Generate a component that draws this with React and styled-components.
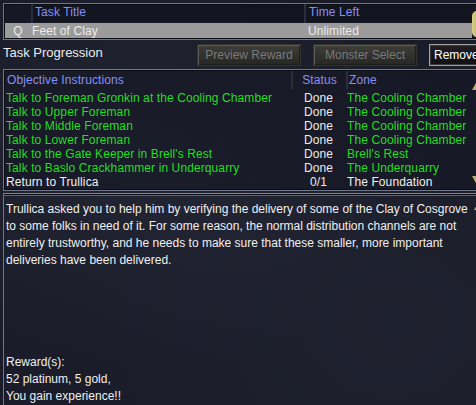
import React from "react";
import styled, { createGlobalStyle } from "styled-components";

const Global = createGlobalStyle`
  html, body { margin: 0; padding: 0; }
  body {
    width: 476px; height: 405px; overflow: hidden;
    background: #1a1c29;
    font-family: "Liberation Sans", Arial, sans-serif;
    font-size: 12px;
    color: #ececec;
  }
`;

const Window = styled.div`
  width: 490px;
  height: 405px;
  display: flex;
  flex-direction: column;
  background:
    radial-gradient(ellipse at 30% 40%, rgba(60,64,84,0.25), transparent 60%),
    radial-gradient(ellipse at 80% 80%, rgba(50,54,72,0.2), transparent 55%),
    #1a1c29;
`;

const Panel = styled.div`
  margin: ${p => p.$margin || "0 0 0 3px"};
  border: 1px solid #6f7689;
  box-shadow: inset 0 0 0 1px #0c0e16;
  padding: 1px;
  display: flex;
  flex-shrink: 0;
  position: relative;
  background: rgba(20, 22, 34, 0.55);
`;

const ListBody = styled.div`
  flex: 1;
  display: flex;
  flex-direction: column;
`;

const Row = styled.div`
  display: grid;
  grid-template-columns: ${p => p.$cols};
  height: ${p => p.$h}px;
  flex-shrink: 0;
  align-items: ${p => p.$alignItems || "center"};
  background: ${p => p.$bg || "transparent"};
  color: ${p => p.$color || "#ececec"};
  white-space: nowrap;
  letter-spacing: 0.1px;
`;

const Cell = styled.div`
  padding-left: ${p => p.$pl || 0}px;
  color: ${p => p.$color || "inherit"};
  height: 100%;
  display: flex;
  align-items: center;
  justify-content: ${p => (p.$align === "center" ? "center" : "flex-start")};
  border-left: ${p => (p.$div ? "2px solid #2b2e3c" : "none")};
  background: ${p => p.$bg || "transparent"};
  overflow: hidden;
`;

const Scroll = styled.div`
  width: 16px;
  display: flex;
  flex-direction: column;
  justify-content: space-between;
  align-items: flex-start;
  padding: ${p => p.$pad || "0"};
`;

const Thumb = styled.div`
  width: 10px;
  height: 26px;
  margin-top: 6px;
  border-radius: 5px;
  background: linear-gradient(90deg, #d8cf86, #b5a85a);
`;

const Arrow = styled.div`
  width: 0; height: 0;
  border-left: 5px solid transparent;
  border-right: 5px solid transparent;
  ${p => p.$down
    ? "border-top: 9px solid #b8ad6a;"
    : "border-bottom: 9px solid #b8ad6a;"}
`;

const Toolbar = styled.div`
  height: 27px;
  flex-shrink: 0;
  display: flex;
  align-items: center;
  padding-left: 3px;
  margin-top: 1px;
`;

const Label = styled.div`
  font-size: 13px;
  width: 194px;
  flex-shrink: 0;
  margin-top: -5px;
`;

const Button = styled.div`
  width: ${p => p.$w}px;
  height: 22px;
  margin-right: 12px;
  box-sizing: border-box;
  display: flex;
  align-items: center;
  justify-content: ${p => (p.$active ? "flex-start" : "center")};
  padding-left: ${p => (p.$active ? "4px" : "0")};
  font-size: 12px;
  color: ${p => (p.$active ? "#ffffff" : "#7a7a7a")};
  border: 1px solid ${p => (p.$active ? "#a0a0a0" : "#34342e")};
  box-shadow: ${p => (p.$active
    ? "inset 0 0 0 1px #3a3a3a"
    : "inset 1px 1px 0 #5c5c52, inset -1px -1px 0 #1c1c18")};
  background-color: ${p => (p.$active ? "#141416" : "#303030")};
  background-image: ${p => (p.$active
    ? "linear-gradient(#202024, #101012)"
    : "linear-gradient(#3e3e3a, #262624)")};
  white-space: nowrap;
  flex-shrink: 0;
`;

const Desc = styled.div`
  margin: 2px 0 0 3px;
  border-top: 1px solid #7d86a0;
  box-shadow: inset 0 1px 0 #0c0e16, inset 0 2px 0 #5d6478;
  border-left: 1px solid #6f7689;
  flex: 1;
  min-height: 0;
  display: flex;
  padding-top: 7px;
`;

const DescText = styled.div`
  flex: 1;
  padding-left: 2px;
  line-height: 17px;
  font-size: 12px;
  color: #f0f0f0;
  white-space: nowrap;
`;

const Reward = styled.div`
  margin-top: 85px;
`;

const GREEN = "#22dd22";
const HEAD = "#8890f2";

const objectives = [
  ["Talk to Foreman Gronkin at the Cooling Chamber", "Done", "The Cooling Chamber", true],
  ["Talk to Upper Foreman", "Done", "The Cooling Chamber", true],
  ["Talk to Middle Foreman", "Done", "The Cooling Chamber", true],
  ["Talk to Lower Foreman", "Done", "The Cooling Chamber", true],
  ["Talk to the Gate Keeper in Brell's Rest", "Done", "Brell's Rest", true],
  ["Talk to Baslo Crackhammer in Underquarry", "Done", "The Underquarry", true],
  ["Return to Trullica", "0/1", "The Foundation", false],
];

const TOPCOLS = "26px 273px 164px";
const OBJCOLS = "286px 55px 123px";

export default function App() {
  return (
    <>
      <Global />
      <Window>
        <Panel $margin="3px 0 0 3px">
          <ListBody>
            <Row $cols={TOPCOLS} $h={17} $color={HEAD} $bg="#12141f">
              <Cell $bg="#161826" />
              <Cell $pl={2} $div style={{ paddingBottom: 3 }}>Task Title</Cell>
              <Cell $pl={3} $div style={{ paddingBottom: 3 }}>Time Left</Cell>
            </Row>
            <Row $cols={TOPCOLS} $h={15} $bg="#9b9b9b" style={{ marginTop: 1 }}>
              <Cell $align="center">Q</Cell>
              <Cell $pl={1}>Feet of Clay</Cell>
              <Cell $pl={4}>Unlimited</Cell>
            </Row>
          </ListBody>
          <Scroll>
            <Thumb />
          </Scroll>
        </Panel>

        <Toolbar>
          <Label>Task Progression</Label>
          <Button $w={104}>Preview Reward</Button>
          <Button $w={104}>Monster Select</Button>
          <Button $w={70} $active>Remove</Button>
        </Toolbar>

        <Panel $margin="1px 0 0 3px">
          <ListBody>
            <Row $cols={OBJCOLS} $h={18} $color={HEAD}>
              <Cell $pl={2}>Objective Instructions</Cell>
              <Cell $align="center" $div>Status</Cell>
              <Cell $pl={1} $div>Zone</Cell>
            </Row>
            <div style={{ height: 2 }} />
            {objectives.map(([t, s, z, done]) => (
              <Row key={t} $cols={OBJCOLS} $h={14}>
                <Cell $pl={1} $color={done ? GREEN : "#f0f0f0"}>{t}</Cell>
                <Cell $align="center">{s}</Cell>
                <Cell $pl={1} $color={done ? GREEN : "#f0f0f0"}>{z}</Cell>
              </Row>
            ))}
          </ListBody>
          <Scroll $pad="10px 0 4px 1px">
            <Arrow />
            <Arrow $down />
          </Scroll>
        </Panel>

        <Desc>
          <DescText>
            Trullica asked you to help him by verifying the delivery of some of the Clay of Cosgrove
            <br />
            to some folks in need of it. For some reason, the normal distribution channels are not
            <br />
            entirely trustworthy, and he needs to make sure that these smaller, more important
            <br />
            deliveries have been delivered.
            <Reward>
              Reward(s):
              <br />
              52 platinum, 5 gold,
              <br />
              You gain experience!!
            </Reward>
          </DescText>
          <Scroll $pad="0 0 0 3px">
            <Arrow />
          </Scroll>
        </Desc>
      </Window>
    </>
  );
}
